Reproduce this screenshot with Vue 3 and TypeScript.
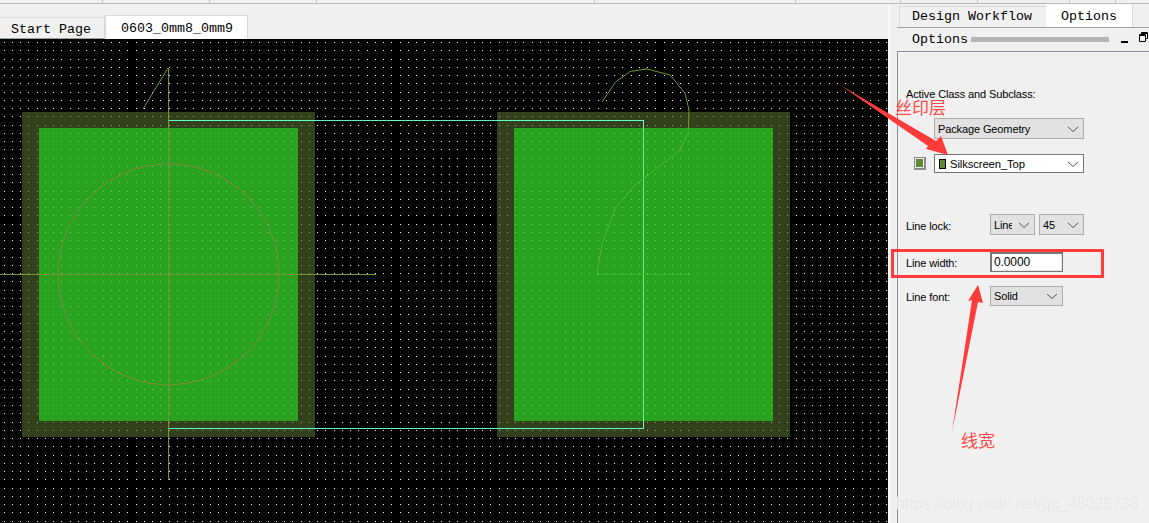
<template>
  <div class="app">
    <div class="menu-strip">
      <i v-for="x in separators" :key="x" class="sep" :style="{ left: x + 'px' }"></i>
    </div>
    <div class="main">
      <div class="editor">
        <div class="tabs">
          <div class="tab start">Start Page</div>
          <div class="tab active doc">0603_0mm8_0mm9</div>
        </div>
        <svg class="canvas" width="888" height="484" viewBox="0 39 888 484">
          <rect x="0" y="39" width="888" height="484" fill="#000" />
          <path :d="dots" fill="#fff" shape-rendering="crispEdges" />
          <g v-for="x in [22, 497]" :key="x" shape-rendering="crispEdges">
            <path :d="ring(x)" fill="rgba(88,112,50,.57)" fill-rule="evenodd" />
            <rect :x="x + 17" y="128" width="259" height="293" fill="rgba(55,225,43,.72)" />
          </g>
          <g fill="none" stroke-width="1">
            <path d="M169 120.5H643.5V428.5H169" stroke="#66ffcc" shape-rendering="crispEdges" />
            <path d="M643.5 128V421" stroke="#66f08a" shape-rendering="crispEdges" />
            <path d="M168.5 68V480M0 274.5H376" stroke="#6f9a35" shape-rendering="crispEdges" />
            <path d="M168.5 128V421M39 274.5H298" stroke="#7f8b3f" shape-rendering="crispEdges" />
            <path d="M168 68L143 109" stroke="#6f9a35" />
            <circle cx="168.7" cy="274.3" r="110.5" stroke="#7f8b3f" />
            <path d="M602 102L615.5 82L630 71.5L647 69L670 75L685 93L689 110L688.5 128" stroke="#6f9a35" />
            <path d="M688.5 128L688 133L679 151L643 179L635 185L615 209L602 244L597.5 270V274.5" stroke="#52b82f" />
            <path d="M597 274.5H690" stroke="#3fb82c" shape-rendering="crispEdges" />
          </g>
        </svg>
      </div>
      <aside class="side">
        <div class="side-tabs">
          <div class="tab workflow">Design Workflow</div>
          <div class="tab active opts">Options</div>
        </div>
        <div class="pane-head">
          <span>Options</span>
          <i class="grip"></i>
          <i class="min"></i>
          <svg class="restore" width="9" height="10" viewBox="0 0 9 10">
            <path d="M2.5 2.5V.5H8.5V6.5H6.5M.5 2.5H6.5V9.5H.5ZM2.5 1.5H8.5M.5 3.5H6.5" fill="none" stroke="#000" />
          </svg>
        </div>
        <div class="pane">
          <div class="caption">Active Class and Subclass:</div>
          <div class="sel wide class-sel">
            <span>Package Geometry</span>
            <svg class="chev" width="12" height="7" viewBox="0 0 12 7"><path d="M1 1L6 5.5L11 1" /></svg>
          </div>
          <div class="sub-row">
            <i class="swatch"><b></b></i>
            <div class="sel wide white">
              <i class="mini"></i>
              <span>Silkscreen_Top</span>
              <svg class="chev" width="12" height="7" viewBox="0 0 12 7"><path d="M1 1L6 5.5L11 1" /></svg>
            </div>
          </div>
          <div class="row lock">
            <label>Line lock:</label>
            <div class="sel small"><span class="clip">Line</span>
              <svg class="chev" width="12" height="7" viewBox="0 0 12 7"><path d="M1 1L6 5.5L11 1" /></svg>
            </div>
            <div class="sel small"><span>45</span>
              <svg class="chev" width="12" height="7" viewBox="0 0 12 7"><path d="M1 1L6 5.5L11 1" /></svg>
            </div>
          </div>
          <div class="row width">
            <label>Line width:</label>
            <div class="field">0.0000</div>
          </div>
          <div class="row font">
            <label>Line font:</label>
            <div class="sel mid"><span>Solid</span>
              <svg class="chev" width="12" height="7" viewBox="0 0 12 7"><path d="M1 1L6 5.5L11 1" /></svg>
            </div>
          </div>
        </div>
      </aside>
    </div>

    <!-- red notes pasted on top of the screenshot -->
    <svg class="notes" width="1149" height="523" viewBox="0 0 1149 523">
      <rect x="892.5" y="250.5" width="210" height="26" fill="none" stroke="#ff3b3b" stroke-width="3" />
      <path d="M840 85L936 141L941 136L948 155L926 149L928 146Z" fill="#ff3b3b" />
      <path d="M978 285L983 303L978 302L952 432L972 300L968 301Z" fill="#ff3b3b" />
    </svg>
    <span class="note silk">丝印层</span>
    <span class="note lw">线宽</span>
    <span class="mark">https://blog.csdn.net/qq_45025738</span>
  </div>
</template>

<script setup lang="ts">
const separators = [102, 209, 316, 594, 795, 900, 977, 1069, 1115]

// grid of the board editor, one pixel every 8.25
function buildDots(): string {
  let d = ''
  for (let j = 0; j < 59; j++) {
    const y = Math.floor(42.5 + 8.25 * j)
    for (let i = 0; i < 108; i++) {
      const x = Math.floor(4 + 8.25 * i)
      d += `M${x} ${y}h1v1h-1z`
    }
  }
  return d
}

const dots = buildDots()

function ring(x: number): string {
  return `M${x} 112h293v325h-293zM${x + 17} 128v293h259v-293z`
}
</script>

<style>
html, body { margin: 0; padding: 0; background: #f0f0f0; overflow: hidden; }
</style>

<style scoped>
.app { position: relative; width: 1149px; height: 523px; background: #f0f0f0; overflow: hidden; font-family: "Liberation Sans", Arial, sans-serif; color: #000; }
.menu-strip { position: relative; height: 3px; border-bottom: 1px solid #bcbcbc; box-sizing: content-box; }
.sep { position: absolute; top: 0; width: 1px; height: 3px; background: #c4c4c4; }
.main { display: flex; height: 519px; }
.editor { width: 888px; display: flex; flex-direction: column; }
.tabs { height: 35px; display: flex; align-items: flex-end; box-sizing: border-box; }
.tab { font-family: "Liberation Mono", "DejaVu Sans Mono", monospace; font-size: 13.33px; box-sizing: border-box; white-space: nowrap; }
.tab.start { width: 105px; height: 22px; padding: 4px 0 0 11px; border-top: 1px solid #d9d9d9; border-right: 1px solid #d9d9d9; border-bottom: 1px solid #a0a0a0; }
.tab.active { background: #fff; border: 1px solid #d9d9d9; border-bottom: none; }
.tab.doc { width: 143px; height: 24px; padding: 5px 0 0 15px; }
.canvas { display: block; }
.side { flex: 1; border-left: 2px solid #fafafa; display: flex; flex-direction: column; padding-left: 7px; min-width: 0; }
.side-tabs { height: 23px; display: flex; align-items: flex-end; border-bottom: 1px solid #a0a0a0; box-sizing: content-box; }
.tab.workflow { width: 147px; height: 21px; margin-left: 2px; padding: 2px 0 0 12px; border: 1px solid #d9d9d9; border-bottom: none; border-right: none; }
.tab.opts { width: 87px; height: 23px; padding: 5px 0 0 15px; border-top: none; border-left: none; }
.pane-head { height: 23px; display: flex; align-items: center; padding-left: 15px; font-family: "Liberation Mono", monospace; font-size: 13.33px; }
.grip { width: 138px; height: 5px; margin-left: 3px; background: #b5b5b5; }
.min { width: 7px; height: 2px; margin: 4px 0 0 12px; background: #000; }
.restore { margin: -5px 0 0 11px; }
.pane { flex: 1; border-top: 1px solid #8a9098; border-left: 1px solid #8a9098; padding-left: 8px; font-size: 11px; letter-spacing: -.12px; }
.caption { margin-top: 36px; line-height: 13px; }
.sel { display: flex; align-items: center; box-sizing: border-box; background: #e1e1e1; border: 1px solid #adadad; position: relative; font-size: 11px; padding-left: 3px; }
.sel .chev { position: absolute; right: 4px; top: 50%; margin-top: -3px; fill: none; stroke: #555; stroke-width: 1; }
.wide { width: 150px; }
.class-sel { height: 21px; margin: 17px 0 0 28px; }
.sub-row { display: flex; align-items: center; margin: 15px 0 0 8px; }
.swatch { display: block; width: 12px; height: 13px; box-sizing: border-box; background: #f0f0f0; border: 1px solid #8a8a8a; border-width: 1px 2px 2px 1px; padding: 1px; margin-right: 8px; }
.swatch b { display: block; width: 100%; height: 100%; background: #5f8a33; }
.white { height: 19px; background: #fff; border-color: #777; padding-left: 4px; font-size: 11.3px; }
.mini { display: block; width: 7px; height: 10px; box-sizing: border-box; background: #5f8a33; border: 1px solid #000; margin-right: 4px; }
.row { display: flex; align-items: center; }
.row label { width: 84px; flex: none; padding-top: 2px; }
.lock { margin-top: 41px; height: 21px; gap: 4px; }
.lock label { margin-right: -4px; }
.width { margin-top: 17px; height: 20px; }
.font { margin-top: 14px; height: 20px; }
.small { width: 45px; height: 21px; }
.mid { width: 73px; height: 20px; }
.clip { width: 18px; overflow: hidden; white-space: nowrap; }
.field { width: 73px; height: 20px; box-sizing: border-box; background: #fff; border: 1px solid #777; box-shadow: inset 1px 1px 0 #777, inset -1px -1px 0 #e4e4e4; padding: 2px 0 0 3px; font-size: 12px; }
.notes { position: absolute; left: 0; top: 0; pointer-events: none; }
.note { position: absolute; font-family: "Noto Sans CJK SC", sans-serif; font-size: 17px; line-height: 17px; color: #ff4a4a; }
.silk { left: 895px; top: 98px; }
.lw { left: 961px; top: 431px; }
.mark { position: absolute; left: 896px; top: 495px; font-family: "Liberation Sans", Arial, sans-serif; font-size: 15.8px; line-height: 18px; color: rgba(226,226,226,.9); text-shadow: 0 0 1px #fff; white-space: nowrap; }
</style>
